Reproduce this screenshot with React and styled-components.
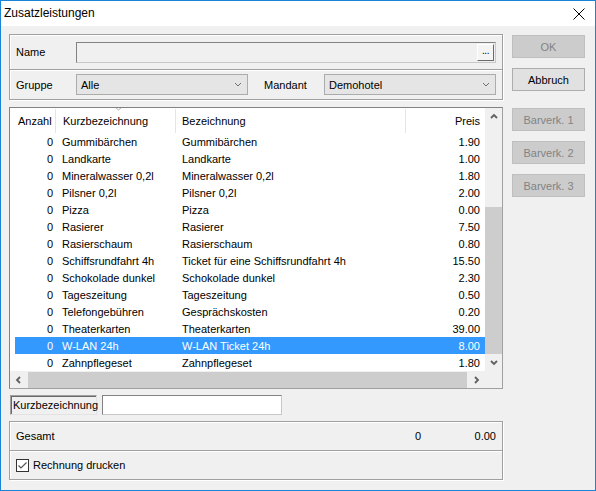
import React from 'react'
import styled, { createGlobalStyle } from 'styled-components'

const Global = createGlobalStyle`
  html, body { margin: 0; padding: 0; background: #fff; }
  body { font-family: "Liberation Sans", Arial, sans-serif; font-size: 11px; color: #000; }
`

const items = [
  ['Gummibärchen', 'Gummibärchen', '1.90'],
  ['Landkarte', 'Landkarte', '1.00'],
  ['Mineralwasser 0,2l', 'Mineralwasser 0,2l', '1.80'],
  ['Pilsner 0,2l', 'Pilsner 0,2l', '2.00'],
  ['Pizza', 'Pizza', '0.00'],
  ['Rasierer', 'Rasierer', '7.50'],
  ['Rasierschaum', 'Rasierschaum', '0.80'],
  ['Schiffsrundfahrt 4h', 'Ticket für eine Schiffsrundfahrt 4h', '15.50'],
  ['Schokolade dunkel', 'Schokolade dunkel', '2.30'],
  ['Tageszeitung', 'Tageszeitung', '0.50'],
  ['Telefongebühren', 'Gesprächskosten', '0.20'],
  ['Theaterkarten', 'Theaterkarten', '39.00'],
  ['W-LAN 24h', 'W-LAN Ticket 24h', '8.00'],
  ['Zahnpflegeset', 'Zahnpflegeset', '1.80'],
]

const Window = styled.div`
  width: 596px;
  height: 491px;
  box-sizing: border-box;
  border: 1px solid #1883d7;
  display: flex;
  flex-direction: column;
  background: #f0f0f0;
`

const TitleBar = styled.div`
  height: 25px;
  background: #fff;
  display: flex;
  align-items: center;
  justify-content: space-between;
  padding: 0 10px 0 3px;
`

const Title = styled.span`
  font-family: "Liberation Sans", Arial, sans-serif;
  font-size: 12px;
  margin-top: -1px;
`

const Body = styled.div`
  flex: 1;
  display: flex;
  padding: 8px 0 0 8px;
  gap: 9px;
`

const LeftCol = styled.div`
  width: 494px;
  display: flex;
  flex-direction: column;
`

const RightCol = styled.div`
  width: 73px;
  padding-top: 1px;
  display: flex;
  flex-direction: column;
`

const Panel = styled.div`
  border: 1px solid #a0a0a0;
  box-shadow: inset 1px 1px 0 #fff, 1px 1px 0 #fff;
  display: flex;
  flex-direction: column;
  margin-top: ${p => p.$mt || 0}px;
`

const PanelRow = styled.div`
  height: ${p => p.$h}px;
  display: flex;
  align-items: center;
  padding: 0 6px;
  border-top: ${p => (p.$sep ? '1px solid #a0a0a0' : 'none')};
  box-shadow: ${p => (p.$sep ? 'inset 0 1px 0 #fff' : 'none')};
`

const Label = styled.span`
  width: ${p => p.$w || 60}px;
  flex-shrink: 0;
`

const GrowLabel = styled.span`
  flex: 1;
`

const TextField = styled.div`
  box-sizing: border-box;
  width: ${p => p.$w}px;
  height: ${p => p.$h || 21}px;
  border: 1px solid #828282;
  border-right-color: #c8c8c8;
  border-bottom-color: #c8c8c8;
  background: ${p => p.$bg || '#fff'};
  display: flex;
  align-items: center;
  justify-content: flex-end;
  padding-right: 1px;
`

const EllipsisBtn = styled.div`
  box-sizing: border-box;
  width: 17px;
  height: 17px;
  background: #f4f4f4;
  border: 1px solid #fff;
  border-right-color: #6a6a6a;
  border-bottom-color: #6a6a6a;
  font-size: 10px;
  line-height: 12px;
  text-align: center;
  letter-spacing: -0.5px;
`

const Combo = styled.div`
  box-sizing: border-box;
  width: 172px;
  height: 21px;
  background: #e5e5e5;
  border: 1px solid #acacac;
  display: flex;
  align-items: center;
  justify-content: space-between;
  padding: 0 5px 0 4px;
  margin-right: ${p => p.$mr || 0}px;
`

const Button = styled.div`
  box-sizing: border-box;
  height: 23px;
  margin-top: ${p => p.$mt || 0}px;
  background: ${p => (p.$disabled ? '#cccccc' : '#e1e1e1')};
  border: 1px solid ${p => (p.$disabled ? '#bfbfbf' : '#adadad')};
  color: ${p => (p.$disabled ? '#838383' : '#000')};
  display: flex;
  align-items: center;
  justify-content: center;
`

const List = styled.div`
  margin-top: 7px;
  height: 282px;
  box-sizing: border-box;
  border: 1px solid #828282;
  border-right-color: #a0a0a0;
  border-bottom-color: #a0a0a0;
  background: #fff;
  display: grid;
  grid-template-columns: 1fr 17px;
  grid-template-rows: 1fr 17px;
`

const Rows = styled.div`
  overflow: hidden;
`

const GridLine = styled.div`
  display: grid;
  grid-template-columns: 41px 120px 230px 1fr;
  margin-left: 5px;
  height: ${p => p.$h}px;
  background: ${p => (p.$sel ? '#3399ff' : 'transparent')};
  color: ${p => (p.$sel ? '#fff' : '#000')};
`

const HeadCell = styled.div`
  position: relative;
  display: flex;
  align-items: center;
  justify-content: ${p => (p.$right ? 'flex-end' : 'flex-start')};
  padding: ${p => p.$pad};
  border-right: ${p => (p.$sep ? '1px solid #e5e5e5' : 'none')};
  margin: 1px 0 0;
`

const SortMark = styled.svg`
  position: absolute;
  top: -3px;
  left: 58px;
`

const Cell = styled.div`
  display: flex;
  align-items: center;
  justify-content: ${p => (p.$right ? 'flex-end' : 'flex-start')};
  padding: ${p => p.$pad};
  white-space: nowrap;
  overflow: hidden;
`

const VScroll = styled.div`
  background: #f0f0f0;
  display: flex;
  flex-direction: column;
`

const HScroll = styled.div`
  background: #f0f0f0;
  display: flex;
`

const Arrow = styled.div`
  width: 17px;
  height: 17px;
  flex-shrink: 0;
  display: flex;
  align-items: center;
  justify-content: center;
`

const VThumb = styled.div`
  margin-top: auto;
  height: 147px;
  background: #cdcdcd;
`

const HThumb = styled.div`
  flex: 1;
  margin: 1px 1px 0;
  background: #cdcdcd;
`

const Corner = styled.div`
  background: #f0f0f0;
`

const SearchRow = styled.div`
  margin-top: 6px;
  height: 20px;
  display: flex;
  gap: 5px;
  padding-left: 1px;
`

const SearchLabel = styled.div`
  box-sizing: border-box;
  width: 87px;
  border: 1px solid #a0a0a0;
  border-right-color: #e3e3e3;
  border-bottom-color: #e3e3e3;
  box-shadow: inset 1px 1px 0 #696969;
  display: flex;
  align-items: center;
  padding-left: 2px;
`

const Value = styled.span`
  width: ${p => p.$w || 'auto'};
  text-align: right;
`

const Check = styled.div`
  box-sizing: border-box;
  width: 13px;
  height: 13px;
  border: 1px solid #333;
  background: #fff;
  margin-right: 4px;
  display: flex;
  align-items: center;
  justify-content: center;
`

const Chevron = ({ dir = 'down', color = '#606060', w = 1.8 }) => {
  const paths = {
    down: 'M1 2 L4 5 L7 2',
    up: 'M1 5 L4 2 L7 5',
    left: 'M5 1 L2 4 L5 7',
    right: 'M2 1 L5 4 L2 7',
  }
  return (
    <svg width="8" height="8" viewBox="0 0 8 8">
      <path d={paths[dir]} fill="none" stroke={color} strokeWidth={w} />
    </svg>
  )
}

export default function App() {
  return (
    <>
      <Global />
      <Window>
        <TitleBar>
          <Title>Zusatzleistungen</Title>
          <svg width="12" height="12" viewBox="0 0 12 12">
            <path d="M0.5 0.5 L11.5 11.5 M11.5 0.5 L0.5 11.5" stroke="#000" strokeWidth="1" />
          </svg>
        </TitleBar>
        <Body>
          <LeftCol>
            <Panel>
              <PanelRow $h={34}>
                <Label>Name</Label>
                <TextField $w={420} $bg="#f0f0f0">
                  <EllipsisBtn>...</EllipsisBtn>
                </TextField>
              </PanelRow>
              <PanelRow $h={29} $sep>
                <Label>Gruppe</Label>
                <Combo $mr={16}>
                  <span>Alle</span>
                  <Chevron color="#707070" w={1} />
                </Combo>
                <Label>Mandant</Label>
                <Combo>
                  <span>Demohotel</span>
                  <Chevron color="#707070" w={1} />
                </Combo>
              </PanelRow>
            </Panel>

            <List>
              <Rows>
                <GridLine $h={25}>
                  <HeadCell $sep $pad="0 0 0 3px">Anzahl</HeadCell>
                  <HeadCell $sep $pad="0 0 0 7px">
                    <SortMark width="9" height="5" viewBox="0 0 9 5">
                      <path d="M0.5 0.5 L4.5 4 L8.5 0.5" fill="none" stroke="#a8a8a8" strokeWidth="1" />
                    </SortMark>
                    Kurzbezeichnung
                  </HeadCell>
                  <HeadCell $sep $pad="0 0 0 6px">Bezeichnung</HeadCell>
                  <HeadCell $right $pad="0 5px 0 0">Preis</HeadCell>
                </GridLine>
                {items.map(([kurz, bez, preis]) => (
                  <GridLine key={kurz} $h={17} $sel={kurz === 'W-LAN 24h'}>
                    <Cell $right $pad="0 3px 0 0">0</Cell>
                    <Cell $pad="0 0 0 6px">{kurz}</Cell>
                    <Cell $pad="0 0 0 6px">{bez}</Cell>
                    <Cell $right $pad="0 5px 0 0">{preis}</Cell>
                  </GridLine>
                ))}
              </Rows>
              <VScroll>
                <Arrow><Chevron dir="up" /></Arrow>
                <VThumb />
                <Arrow><Chevron dir="down" /></Arrow>
              </VScroll>
              <HScroll>
                <Arrow><Chevron dir="left" /></Arrow>
                <HThumb />
                <Arrow><Chevron dir="right" /></Arrow>
              </HScroll>
              <Corner />
            </List>

            <SearchRow>
              <SearchLabel>Kurzbezeichnung</SearchLabel>
              <TextField $w={180} $h={20} />
            </SearchRow>

            <Panel $mt={6}>
              <PanelRow $h={28}>
                <GrowLabel>Gesamt</GrowLabel>
                <Value>0</Value>
                <Value $w="75px">0.00</Value>
              </PanelRow>
              <PanelRow $h={28} $sep>
                <Check>
                  <svg width="11" height="11" viewBox="0 0 11 11">
                    <path d="M1.5 5.5 L4 8 L9.5 2.5" fill="none" stroke="#555" strokeWidth="1.2" />
                  </svg>
                </Check>
                <span>Rechnung drucken</span>
              </PanelRow>
            </Panel>
          </LeftCol>

          <RightCol>
            <Button $disabled>OK</Button>
            <Button $mt={10}>Abbruch</Button>
            <Button $disabled $mt={17}>Barverk. 1</Button>
            <Button $disabled $mt={10}>Barverk. 2</Button>
            <Button $disabled $mt={10}>Barverk. 3</Button>
          </RightCol>
        </Body>
      </Window>
    </>
  )
}
